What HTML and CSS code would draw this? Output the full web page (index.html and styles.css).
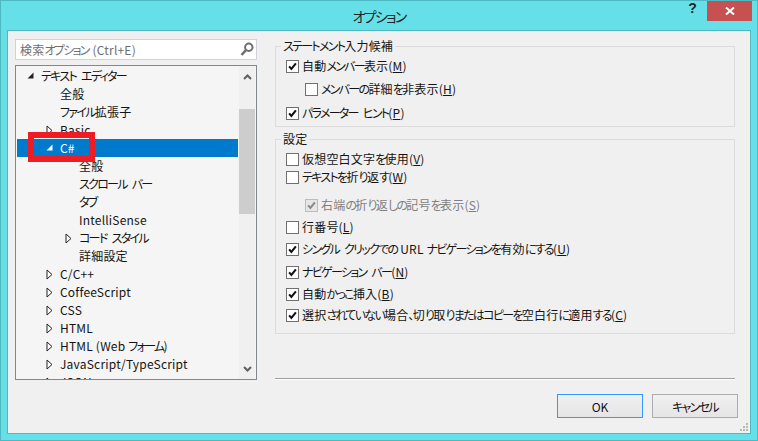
FILE: index.html
```html
<!DOCTYPE html>
<html lang="ja">
<head>
  <meta charset="UTF-8">
  <title>オプション</title>
  <link rel="stylesheet" href="styles.css">
</head>
<body>
  <svg class="defs" width="0" height="0">
    <symbol id="check" viewBox="0 0 13 13">
      <path d="M2.5 6.3 L5.2 9.4 L10.5 2.8" fill="none" stroke="currentColor" stroke-width="2.4"/>
    </symbol>
    <symbol id="open" viewBox="0 0 7 7">
      <path d="M6.5 0.5 V6.5 H0.5 Z" fill="currentColor"/>
    </symbol>
    <symbol id="closed" viewBox="0 0 7 11">
      <path d="M1 1 L6 5.5 L1 10 Z" fill="#fff" stroke="#222" stroke-width="1"/>
    </symbol>
  </svg>

  <div class="window">
    <div class="titlebar">
      <div></div>
      <div class="title"><span class="k">オプション</span></div>
      <div class="controls">
        <span class="help">?</span>
        <span class="close">
          <svg width="10" height="8" viewBox="0 0 10 8"><path d="M1 0.5 L9 7.5 M9 0.5 L1 7.5" stroke="#fff" stroke-width="2"/></svg>
        </span>
      </div>
    </div>

    <div class="client">
      <div class="left">
        <div class="search">
          <span class="search-text">検索<span class="k">オプション</span> (Ctrl+E)</span>
          <svg width="14" height="15" viewBox="0 0 14 15"><circle cx="8.8" cy="5.2" r="3.7" fill="none" stroke="#6d6d6d" stroke-width="2"/><path d="M6 8 L1.5 13" stroke="#6d6d6d" stroke-width="2.6"/></svg>
        </div>

        <div class="tree">
          <div class="tree-rows">
            <div class="node"><svg class="arrow open"><use href="#open"/></svg><span class="k">テキスト エディター</span></div>
            <div class="node lv1">全般</div>
            <div class="node lv1"><span class="k">ファイル</span>拡張子</div>
            <div class="node lv1"><svg class="arrow"><use href="#closed"/></svg>Basic</div>
            <div class="node lv1 selected"><svg class="arrow open"><use href="#open"/></svg>C#</div>
            <div class="node lv2">全般</div>
            <div class="node lv2"><span class="k">スクロール バー</span></div>
            <div class="node lv2"><span class="k">タブ</span></div>
            <div class="node lv2">IntelliSense</div>
            <div class="node lv2"><svg class="arrow"><use href="#closed"/></svg><span class="k">コード スタイル</span></div>
            <div class="node lv2">詳細設定</div>
            <div class="node lv1"><svg class="arrow"><use href="#closed"/></svg>C/C++</div>
            <div class="node lv1"><svg class="arrow"><use href="#closed"/></svg>CoffeeScript</div>
            <div class="node lv1"><svg class="arrow"><use href="#closed"/></svg>CSS</div>
            <div class="node lv1"><svg class="arrow"><use href="#closed"/></svg>HTML</div>
            <div class="node lv1"><svg class="arrow"><use href="#closed"/></svg>HTML (Web <span class="k">フォーム</span>)</div>
            <div class="node lv1"><svg class="arrow"><use href="#closed"/></svg>JavaScript/TypeScript</div>
            <div class="node lv1"><svg class="arrow"><use href="#closed"/></svg>JSON</div>
          </div>
          <div class="scrollbar">
            <svg width="9" height="6" viewBox="0 0 9 6"><path d="M1 5 L4.5 1.5 L8 5" fill="none" stroke="#606060" stroke-width="2"/></svg>
            <div class="thumb"></div>
            <svg class="down" width="9" height="6" viewBox="0 0 9 6"><path d="M1 1 L4.5 4.5 L8 1" fill="none" stroke="#606060" stroke-width="2"/></svg>
          </div>
          <div class="highlight"></div>
        </div>
      </div>

      <div class="right">
        <fieldset class="group first">
          <legend><span class="k">ステートメント</span>入力候補</legend>
          <div class="row"><span class="box"><svg><use href="#check"/></svg></span>自動<span class="k">メンバー</span>表示(<u>M</u>)</div>
          <div class="row sub mt5"><span class="box"></span><span class="k">メンバーの</span>詳細<span class="k">を</span>非表示(<u>H</u>)</div>
          <div class="row mt6"><span class="box"><svg><use href="#check"/></svg></span><span class="k">パラメーター ヒント</span>(<u>P</u>)</div>
        </fieldset>

        <fieldset class="group second">
          <legend>設定</legend>
          <div class="row"><span class="box"></span>仮想空白文字<span class="k">を</span>使用(<u>V</u>)</div>
          <div class="row"><span class="box"></span><span class="k">テキストを</span>折<span class="k">り</span>返<span class="k">す</span>(<u>W</u>)</div>
          <div class="row sub disabled mt10"><span class="box"><svg><use href="#check"/></svg></span>右端<span class="k">の</span>折<span class="k">り</span>返<span class="k">しの</span>記号<span class="k">を</span>表示(<u>S</u>)</div>
          <div class="row mt4"><span class="box"></span>行番号(<u>L</u>)</div>
          <div class="row mt4"><span class="box"><svg><use href="#check"/></svg></span><span class="k">シングル クリックでの</span> URL <span class="k">ナビゲーションを</span>有効<span class="k">にする</span>(<u>U</u>)</div>
          <div class="row mt5"><span class="box"><svg><use href="#check"/></svg></span><span class="k">ナビゲーション バー</span>(<u>N</u>)</div>
          <div class="row mt4"><span class="box"><svg><use href="#check"/></svg></span>自動<span class="k">かっこ</span>挿入(<u>B</u>)</div>
          <div class="row mt3"><span class="box"><svg><use href="#check"/></svg></span>選択<span class="k">されていない</span>場合<span class="k">、</span>切<span class="k">り</span>取<span class="k">りまたはコピーを</span>空白行<span class="k">に</span>適用<span class="k">する</span>(<u>C</u>)</div>
        </fieldset>

        <div class="separator"></div>

        <div class="buttons">
          <button class="btn default">OK</button>
          <button class="btn"><span class="k">キャンセル</span></button>
        </div>
      </div>

      <svg class="grip" width="9" height="9" viewBox="0 0 9 9" fill="#b8b8b8">
        <rect x="6" y="0" width="2" height="2"/><rect x="3" y="3" width="2" height="2"/><rect x="6" y="3" width="2" height="2"/>
        <rect x="0" y="6" width="2" height="2"/><rect x="3" y="6" width="2" height="2"/><rect x="6" y="6" width="2" height="2"/>
      </svg>
    </div>
  </div>
</body>
</html>
```

FILE: styles.css
```css
html, body {
  margin: 0;
  padding: 0;
}

body {
  width: 758px;
  height: 441px;
  overflow: hidden;
  font-family: "Noto Sans CJK JP", "Noto Sans", sans-serif;
  font-size: 12px;
  font-feature-settings: "palt";
  letter-spacing: 0.2px;
  color: #141414;
}

/* kana runs sit tighter than kanji in the dialog font */
.k {
  letter-spacing: -1.7px;
  word-spacing: 4px;
}

.defs {
  position: absolute;
}

.window {
  box-sizing: border-box;
  width: 758px;
  height: 441px;
  display: flex;
  flex-direction: column;
  background: #65e0e8;
  border: 1px solid #4fb8c0;
}

/* title bar */
.titlebar {
  display: grid;
  grid-template-columns: 1fr auto 1fr;
  height: 29px;
  flex-shrink: 0;
}

.title {
  font-size: 14px;
  line-height: 30px;
  color: #222;
}

.controls {
  display: flex;
  justify-content: flex-end;
  padding-right: 5px;
}

.help {
  font-family: "Liberation Sans", sans-serif;
  font-size: 14px;
  font-weight: bold;
  line-height: 15px;
  color: #222;
  margin-right: 10px;
}

.close {
  width: 45px;
  height: 20px;
  background: #c75050;
  display: flex;
  align-items: center;
  justify-content: center;
}

/* dialog body */
.client {
  position: relative;
  display: flex;
  flex: 1;
  margin: 0 6px 6px;
  padding: 8px 12px 0 7px;
  background: #f0f0f0;
  border: 1px solid #4fb8c0;
}

.left {
  width: 242px;
  flex-shrink: 0;
}

.search {
  box-sizing: border-box;
  height: 21px;
  display: flex;
  align-items: center;
  justify-content: space-between;
  padding: 0 2px 0 4px;
  background: #fff;
  border: 1px solid #d2d2dc;
}

.search-text {
  color: #6f6f6f;
  line-height: 19px;
  word-spacing: 1px;
}

.tree {
  position: relative;
  box-sizing: border-box;
  height: 315px;
  margin-top: 5px;
  display: flex;
  background: #f5f5f5;
  border: 1px solid #828790;
}

.tree-rows {
  flex: 1;
  overflow: hidden;
  padding: 1px 0 0 1px;
}

.node {
  position: relative;
  height: 18px;
  line-height: 18px;
  padding-left: 24px;
  white-space: nowrap;
}

.node.lv1 {
  padding-left: 43px;
}

.node.lv2 {
  padding-left: 62px;
}

.node.selected {
  background: #007acc;
  color: #fff;
}

.arrow {
  position: absolute;
  left: 29px;
  top: 4px;
  width: 7px;
  height: 11px;
  color: #222;
}

.lv2 .arrow {
  left: 48px;
}

.arrow.open {
  left: 10px;
  top: 5px;
  height: 7px;
}

.lv1 .arrow.open {
  left: 29px;
}

.selected .arrow.open {
  color: #fff;
}

.scrollbar {
  width: 16px;
  flex-shrink: 0;
  margin: 0 1px 0 1px;
  display: flex;
  flex-direction: column;
  align-items: center;
  background: #f0f0f0;
  padding-top: 8px;
  box-sizing: border-box;
}

.thumb {
  width: 100%;
  height: 105px;
  margin-top: 29px;
  background: #cdcdcd;
}

.down {
  margin-top: auto;
  margin-bottom: 7px;
}

.highlight {
  position: absolute;
  left: 12px;
  top: 66px;
  width: 55px;
  height: 18px;
  border: 6px solid #ee1c25;
}

/* right side */
.right {
  flex: 1;
  margin-left: 18px;
  display: flex;
  flex-direction: column;
}

.group {
  margin: 0 3px 0 0;
  padding: 3px 0 0 10px;
  min-width: 0;
  border: 1px solid #dcdcdc;
}

.group legend {
  padding: 0 2px;
  margin-left: -5px;
  line-height: 16px;
}

.group.first {
  height: 84px;
  margin-top: -1px;
}

.group.second {
  height: 198px;
  margin-top: 4px;
}

.row {
  display: flex;
  align-items: center;
  height: 18px;
  line-height: 18px;
  white-space: pre;
}

.row.sub {
  margin-left: 19px;
}

.row.disabled {
  color: #7e7e7e;
}

.mt3 { margin-top: 3px; }
.mt4 { margin-top: 4px; }
.mt5 { margin-top: 5px; }
.mt6 { margin-top: 6px; }
.mt10 { margin-top: 10px; }

.box {
  box-sizing: border-box;
  width: 13px;
  height: 13px;
  flex-shrink: 0;
  margin-right: 3px;
  background: #fff;
  border: 1px solid #707070;
  color: #111;
}

.box svg {
  display: block;
  width: 11px;
  height: 11px;
}

.disabled .box {
  background: #e6e6e6;
  border-color: #bcbcbc;
  color: #8a8a8a;
}

.separator {
  height: 1px;
  margin: 44px 3px 0 0;
  background: #a0a0a0;
  box-shadow: 0 1px 0 #fff;
}

.buttons {
  display: flex;
  justify-content: flex-end;
  gap: 9px;
  margin-top: 15px;
}

.btn {
  box-sizing: border-box;
  width: 86px;
  height: 24px;
  padding: 0;
  font: inherit;
  color: #111;
  background: linear-gradient(#f0f0f0, #e5e5e5);
  border: 1px solid #acacac;
}

.btn.default {
  border-color: #3399ff;
}

.grip {
  position: absolute;
  right: 1px;
  bottom: 1px;
}
```
